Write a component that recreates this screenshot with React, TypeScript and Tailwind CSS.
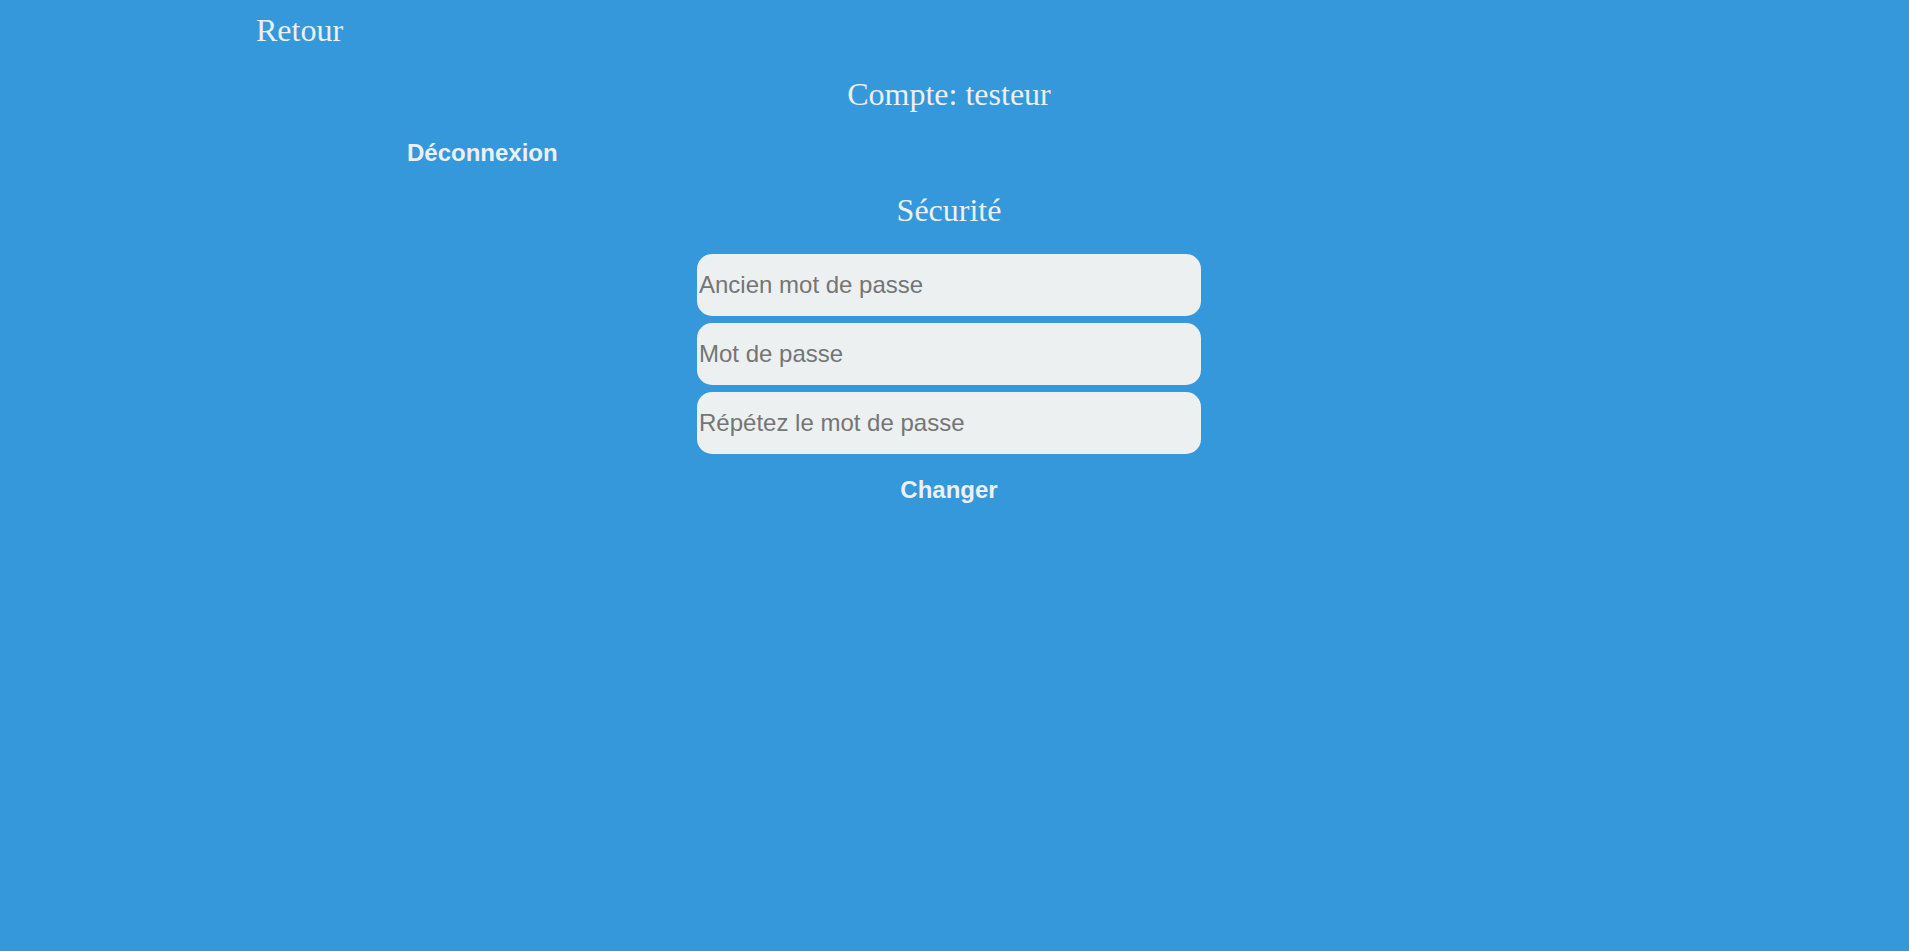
import React from "react";

export default function App() {
  const fields = ["Ancien mot de passe", "Mot de passe", "Répétez le mot de passe"];

  return (
    <div className="min-h-screen w-full bg-[#3498db] text-[#ecf0f1]">
      <div className="flex flex-col pt-3 pr-[11px]">
        {/* Navigation */}
        <a
          href="#"
          className="pl-[256px] font-['Liberation_Serif','Times_New_Roman',serif] text-[32px] leading-[36px] text-[#ecf0f1]"
        >
          Retour
        </a>

        <h1 className="mt-[28px] text-center font-['Liberation_Serif','Times_New_Roman',serif] text-[32px] font-normal leading-[36px]">
          Compte: testeur
        </h1>

        <div className="mt-[27px] pl-[407px]">
          <button className="font-['Liberation_Sans',Arial,sans-serif] text-[24px] font-bold leading-[28px] text-[#ecf0f1]">
            Déconnexion
          </button>
        </div>

        {/* Password change */}
        <h2 className="mt-[25px] text-center font-['Liberation_Serif','Times_New_Roman',serif] text-[32px] font-normal leading-[36px]">
          Sécurité
        </h2>

        <form className="mt-[26px] flex flex-col items-center" onSubmit={(e) => e.preventDefault()}>
          <div className="flex flex-col gap-[7px]">
            {fields.map((f) => (
              <input
                key={f}
                type="password"
                placeholder={f}
                className="h-[62px] w-[504px] rounded-[15px] border-0 bg-[#ecf0f1] pl-[2px] font-['Liberation_Sans',Arial,sans-serif] text-[24px] text-[#333] outline-none placeholder:text-[#757575]"
              />
            ))}
          </div>
          <button
            type="submit"
            className="mt-[22px] font-['Liberation_Sans',Arial,sans-serif] text-[24px] font-bold leading-[28px] text-[#ecf0f1]"
          >
            Changer
          </button>
        </form>
      </div>
    </div>
  );
}
